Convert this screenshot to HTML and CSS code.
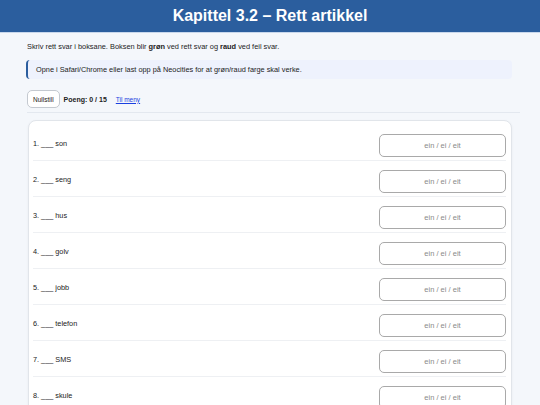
FILE: index.html
```html
<!DOCTYPE html>
<html lang="nn">
<head>
    <meta charset="UTF-8">
    <meta name="viewport" content="width=device-width, initial-scale=1.0">
    <title>Kapittel 3.2 – Rett artikkel</title>
    <link rel="stylesheet" href="styles.css">
</head>
<body>
    <div class="header">
        <h1>Kapittel 3.2 – Rett artikkel</h1>
    </div>

    <div class="container">
        <p class="intro">Skriv rett svar i boksane. Boksen blir <b>grøn</b> ved rett svar og <b>raud</b> ved feil svar.</p>
        <div class="notice">Opne i Safari/Chrome eller last opp på Neocities for at grøn/raud farge skal verke.</div>

        <div class="toolbar">
            <button class="reset-btn">Nullstill</button>
            <span class="score">Poeng: 0 / 15</span>
            <a href="#" class="menu-link">Til meny</a>
        </div>

        <div class="card">
            <div class="row"><span class="label">1. ___ son</span><input type="text" placeholder="ein / ei / eit"></div>
            <div class="row"><span class="label">2. ___ seng</span><input type="text" placeholder="ein / ei / eit"></div>
            <div class="row"><span class="label">3. ___ hus</span><input type="text" placeholder="ein / ei / eit"></div>
            <div class="row"><span class="label">4. ___ golv</span><input type="text" placeholder="ein / ei / eit"></div>
            <div class="row"><span class="label">5. ___ jobb</span><input type="text" placeholder="ein / ei / eit"></div>
            <div class="row"><span class="label">6. ___ telefon</span><input type="text" placeholder="ein / ei / eit"></div>
            <div class="row"><span class="label">7. ___ SMS</span><input type="text" placeholder="ein / ei / eit"></div>
            <div class="row"><span class="label">8. ___ skule</span><input type="text" placeholder="ein / ei / eit"></div>
            <div class="row"><span class="label">9. ___ bok</span><input type="text" placeholder="ein / ei / eit"></div>
            <div class="row"><span class="label">10. ___ bil</span><input type="text" placeholder="ein / ei / eit"></div>
        </div>
    </div>
</body>
</html>
```

FILE: styles.css
```css
body {
    font-family: 'Liberation Sans', Arial, sans-serif;
    background-color: #F4F7FB;
    margin: 0;
    padding: 0;
    color: #222;
}
.header {
    background-color: #2B5E9E;
    height: 32px;
    border-bottom: 1px solid #C9D8EC;
    display: flex;
    align-items: center;
    justify-content: center;
}
.header h1 {
    margin: 0;
    color: #FFFFFF;
    font-size: 16px;
    font-weight: bold;
}
.container {
    margin: 0 20px;
}
.intro {
    font-size: 7.4px;
    margin: 9px 0 0 7px;
    line-height: 10px;
}
.notice {
    margin: 8px 8px 0 6px;
    height: 19px;
    line-height: 19px;
    padding-left: 8px;
    font-size: 7.35px;
    background-color: #EEF2FD;
    border-left: 2px solid #2B5E9E;
    border-radius: 4px;
}
.toolbar {
    display: flex;
    align-items: center;
    gap: 4px;
    margin: 11px 0 0 7px;
    padding-bottom: 4px;
    border-bottom: 1px solid #E3E8EF;
}
.reset-btn {
    font-family: inherit;
    font-size: 6.5px;
    background-color: #FFFFFF;
    border: 1px solid #C4C9D0;
    border-radius: 5px;
    padding: 0 5px;
    height: 18px;
    color: #222;
}
.score {
    font-size: 7px;
    font-weight: bold;
}
.menu-link {
    font-size: 6.5px;
    color: #1A3FE0;
    margin-left: 5px;
}
.card {
    background-color: #FFFFFF;
    margin: 7px 8px 0 8px;
    border: 1px solid #E1E5EA;
    border-radius: 8px;
    padding: 4px 5px 0 4px;
    box-shadow: 0 1px 3px rgba(0, 0, 0, 0.05);
}
.row {
    display: flex;
    justify-content: space-between;
    align-items: flex-start;
    padding: 9px 0 3px 0;
    border-bottom: 1px solid #EEF0F3;
}
.label {
    font-size: 7.3px;
    margin-top: 5px;
    color: #222;
}
.row input {
    width: 127px;
    height: 23px;
    box-sizing: border-box;
    border: 1px solid #A9A9A9;
    border-radius: 5px;
    text-align: center;
    font-family: inherit;
    font-size: 7.5px;
    padding: 0;
}
.row input::placeholder {
    color: #8A8A8A;
}
```
